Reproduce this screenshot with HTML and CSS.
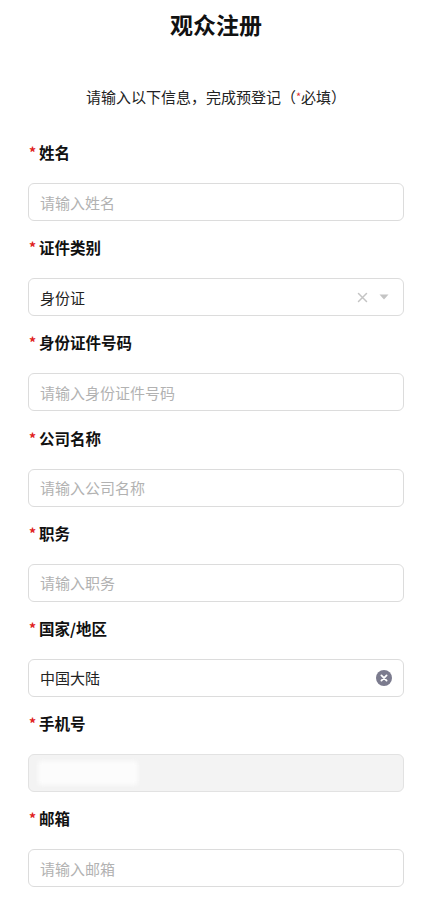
FILE: index.html
```html
<!DOCTYPE html>
<html lang="zh-CN">
<head>
<meta charset="utf-8">
<title>观众注册</title>
<link rel="stylesheet" href="styles.css">
</head>
<body>
<div class="page">
  <h1 class="title">观众注册</h1>
  <p class="subtitle">请输入以下信息，完成预登记（<span class="req-s">*</span>必填）</p>

  <div class="field">
    <div class="label"><span class="req">*</span>姓名</div>
    <div class="input"><span class="ph">请输入姓名</span></div>
  </div>

  <div class="field">
    <div class="label"><span class="req">*</span>证件类别</div>
    <div class="input">
      <span class="val">身份证</span>
      <span class="icons">
        <svg class="x-icon" width="11" height="11" viewBox="0 0 11 11"><path d="M1.5 1.5L9.5 9.5M9.5 1.5L1.5 9.5" stroke="#c4c4c4" stroke-width="1.5" stroke-linecap="round"/></svg>
        <svg class="caret" width="10" height="6" viewBox="0 0 10 6"><path d="M0.5 0.5H9.5L5 5.5Z" fill="#c4c4c4"/></svg>
      </span>
    </div>
  </div>

  <div class="field">
    <div class="label"><span class="req">*</span>身份证件号码</div>
    <div class="input"><span class="ph">请输入身份证件号码</span></div>
  </div>

  <div class="field">
    <div class="label"><span class="req">*</span>公司名称</div>
    <div class="input"><span class="ph">请输入公司名称</span></div>
  </div>

  <div class="field">
    <div class="label"><span class="req">*</span>职务</div>
    <div class="input"><span class="ph">请输入职务</span></div>
  </div>

  <div class="field">
    <div class="label"><span class="req">*</span>国家/地区</div>
    <div class="input">
      <span class="val">中国大陆</span>
      <svg class="clear" width="16" height="16" viewBox="0 0 16 16"><circle cx="8" cy="8" r="8" fill="#7b7b8e"/><path d="M5.4 5.4L10.6 10.6M10.6 5.4L5.4 10.6" stroke="#fff" stroke-width="1.8" stroke-linecap="round"/></svg>
    </div>
  </div>

  <div class="field">
    <div class="label"><span class="req">*</span>手机号</div>
    <div class="input disabled"><span class="masked"></span></div>
  </div>

  <div class="field">
    <div class="label"><span class="req">*</span>邮箱</div>
    <div class="input"><span class="ph">请输入邮箱</span></div>
  </div>
</div>
</body>
</html>
```

FILE: styles.css
```css
* { box-sizing: border-box; }
html, body { margin: 0; padding: 0; background: #fff; }
body {
  font-family: "Noto Sans CJK SC", "Noto Sans", sans-serif;
  color: #111;
}
.page {
  padding: 0 28px;
}
.title {
  margin: 0;
  padding-top: 10px;
  height: 39px;
  line-height: 28px;
  font-size: 23px;
  font-weight: 700;
  text-align: center;
  color: #111;
}
.subtitle {
  margin: 46px 0 0;
  line-height: 22px;
  font-size: 15px;
  text-align: center;
  color: #222;
}
.req-s { color: #e03030; font-size: 11px; vertical-align: 2px; }
.field {
  display: flex;
  flex-direction: column;
}
.subtitle + .field { margin-top: 34px; }
.field + .field { margin-top: 16px; }
.field:nth-of-type(odd) + .field { margin-top: 16.3px; }
.label {
  height: 20px;
  line-height: 20px;
  font-size: 15.5px;
  font-weight: 700;
  color: #111;
  display: flex;
  align-items: center;
}
.req {
  color: #e02020;
  font-size: 14px;
  margin-right: 3px;
  margin-left: 1px;
}
.input {
  margin-top: 21px;
  height: 38px;
  border: 1px solid #dcdcdc;
  border-radius: 6px;
  padding: 0 12px 0 11px;
  display: flex;
  align-items: center;
  justify-content: space-between;
  font-size: 15px;
}
.ph { color: #b2b2b2; }
.val { color: #222; }
.icons { display: flex; align-items: center; gap: 11px; margin-right: 2px; }
.clear { margin-right: -1px; }
.disabled {
  background: #f3f3f3;
  border-color: #e2e2e2;
  padding-left: 9px;
}
.masked {
  display: block;
  width: 100px;
  height: 24px;
  background: #fcfcfc;
  border-radius: 3px;
  filter: blur(2px);
}
```
